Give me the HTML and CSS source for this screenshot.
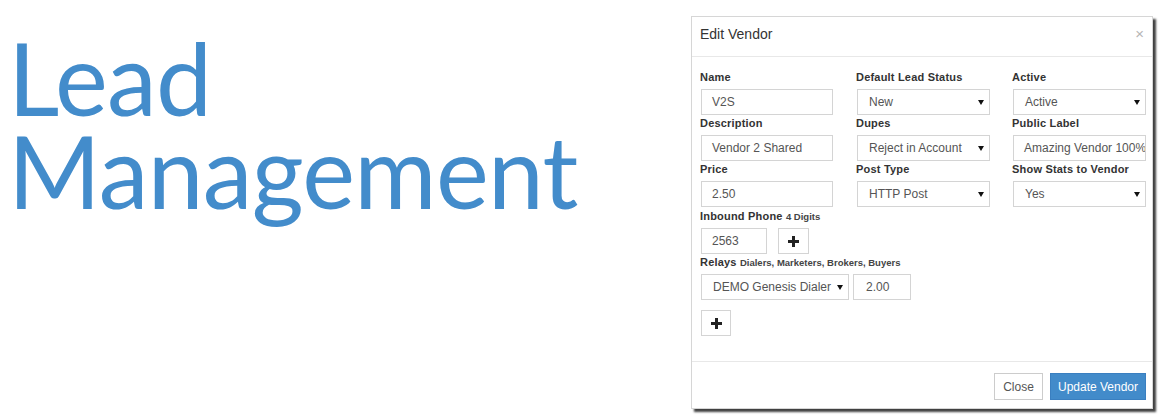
FILE: index.html
```html
<!DOCTYPE html>
<html>
<head>
<meta charset="utf-8">
<link rel="stylesheet" href="styles.css">
</head>
<body>
<div class="page">
  <h1 class="title"><span class="line">Lead</span><span class="line">Management</span></h1>
  <div class="modal">
    <div class="modal-header">
      <span class="modal-title">Edit Vendor</span>
      <span class="close">×</span>
    </div>
    <div class="modal-body">
      <div class="grid">
        <div class="field">
          <div class="label">Name</div>
          <div class="input w132">V2S</div>
        </div>
        <div class="field">
          <div class="label">Default Lead Status</div>
          <div class="select w133"><span>New</span><i class="caret"></i></div>
        </div>
        <div class="field">
          <div class="label">Active</div>
          <div class="select w133"><span>Active</span><i class="caret"></i></div>
        </div>
        <div class="field">
          <div class="label">Description</div>
          <div class="input w132">Vendor 2 Shared</div>
        </div>
        <div class="field">
          <div class="label">Dupes</div>
          <div class="select w133"><span>Reject in Account</span><i class="caret"></i></div>
        </div>
        <div class="field">
          <div class="label">Public Label</div>
          <div class="input w133 clip">Amazing Vendor 100%</div>
        </div>
        <div class="field">
          <div class="label">Price</div>
          <div class="input w132">2.50</div>
        </div>
        <div class="field">
          <div class="label">Post Type</div>
          <div class="select w133"><span>HTTP Post</span><i class="caret"></i></div>
        </div>
        <div class="field">
          <div class="label">Show Stats to Vendor</div>
          <div class="select w133"><span>Yes</span><i class="caret"></i></div>
        </div>
      </div>
      <div class="field phone">
        <div class="label">Inbound Phone <small>4 Digits</small></div>
        <div class="row gap11">
          <div class="input w66">2563</div>
          <div class="btn plus w31"><svg width="11" height="11" viewBox="0 0 11 11"><rect x="4" y="0" width="3" height="11" fill="#222"/><rect x="0" y="4" width="11" height="3" fill="#222"/></svg></div>
        </div>
      </div>
      <div class="field">
        <div class="label">Relays <small>Dialers, Marketers, Brokers, Buyers</small></div>
        <div class="row gap4">
          <div class="select w148"><span>DEMO Genesis Dialer</span><i class="caret"></i></div>
          <div class="input w58">2.00</div>
        </div>
      </div>
      <div class="addrow">
        <div class="btn plus w30"><svg width="11" height="11" viewBox="0 0 11 11"><rect x="4" y="0" width="3" height="11" fill="#222"/><rect x="0" y="4" width="11" height="3" fill="#222"/></svg></div>
      </div>
    </div>
    <div class="modal-footer">
      <div class="btn default">Close</div>
      <div class="btn primary">Update Vendor</div>
    </div>
  </div>
</div>
</body>
</html>
```

FILE: styles.css
```css
* { box-sizing: border-box; }
html, body { margin: 0; padding: 0; background: #fff; }
body { width: 1170px; height: 420px; overflow: hidden; font-family: "Liberation Sans", Arial, sans-serif; color: #333; }

.page { display: flex; align-items: flex-start; }

.title {
  margin: 31px 0 0 0;
  padding-left: 8px;
  width: 691px;
  font-family: Lato, "Open Sans", sans-serif;
  font-weight: 400;
  font-size: 100px;
  color: #438ccb;
  letter-spacing: -0.7px;
  display: flex;
  flex-direction: column;
}
.title .line { display: block; height: 93px; line-height: 93px; overflow: visible; }

.modal {
  margin-top: 16px;
  width: 462px;
  height: 393px;
  border: 1px solid #d6d6d6;
  background: #fff;
  box-shadow: 3px 3px 2px rgba(0,0,0,0.75);
  display: flex;
  flex-direction: column;
}

.modal-header {
  height: 40px;
  border-bottom: 1px solid #e8e8e8;
  display: flex;
  align-items: center;
  justify-content: space-between;
  padding: 0 8px 0 8px;
}
.modal-title { font-size: 14px; color: #333; margin-top: -5px; }
.close { font-size: 15px; color: #b5b5b5; margin-top: -7px; }

.modal-body {
  padding: 14px 7px 0 9px;
  flex: 1;
}
.grid {
  display: grid;
  grid-template-columns: 156px 156px 133px;
  row-gap: 2px;
}
.field { display: flex; flex-direction: column; margin-bottom: 2px; }
.grid .field { margin-bottom: 0; }
.phone { margin-top: 3px; }
.label {
  font-size: 11px;
  font-weight: bold;
  line-height: 13px;
  height: 18px;
  color: #333;
  margin-left: -1px;
  letter-spacing: 0.2px;
}
.label small { font-size: 9.5px; font-weight: bold; letter-spacing: 0; color: #444; }

.input, .select {
  height: 26px;
  border: 1px solid #d4d4d4;
  font-size: 12px;
  color: #555;
  display: flex;
  align-items: center;
  padding-left: 10px;
  white-space: nowrap;
  overflow: hidden;
  background: #fff;
}
.select { padding-left: 11px; justify-content: space-between; padding-right: 5px; }
.caret {
  width: 0; height: 0;
  border-left: 3px solid transparent;
  border-right: 3px solid transparent;
  border-top: 5px solid #111;
  margin-top: 1px;
}
.w132 { width: 132px; }
.w133 { width: 133px; }
.w66 { width: 66px; }
.w148 { width: 148px; }
.w58 { width: 58px; padding-left: 12px; }
.clip { padding-left: 10px; }

.row { display: flex; }
.gap11 { gap: 11px; }
.gap4 { gap: 4px; }

.btn {
  display: flex;
  align-items: center;
  justify-content: center;
  height: 26px;
  border: 1px solid #d4d4d4;
  background: #fff;
  font-size: 12px;
}
.w31 { width: 31px; }
.w30 { width: 30px; }
.addrow { margin-top: 10px; }

.modal-footer {
  border-top: 1px solid #e8e8e8;
  height: 47px;
  display: flex;
  justify-content: flex-end;
  align-items: flex-start;
  padding: 11px 6px 0 0;
  gap: 7px;
}
.default { width: 49px; height: 27px; color: #555; border-color: #ccc; }
.primary { width: 96px; height: 27px; color: #fff; background: #428bca; border-color: #3a7fc0; }
```
